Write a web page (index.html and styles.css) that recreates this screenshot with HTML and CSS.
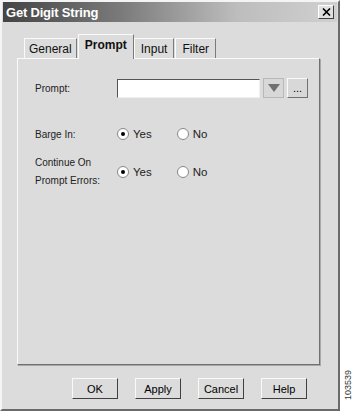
FILE: index.html
```html
<!DOCTYPE html>
<html>
<head>
<meta charset="utf-8">
<link rel="stylesheet" href="styles.css">
</head>
<body>
<div class="page">
  <div class="window">
    <div class="titlebar">
      <span class="title">Get Digit String</span>
      <span class="close">
        <svg width="9" height="8" viewBox="0 0 9 8"><path d="M1 0.5 L8 7.5 M8 0.5 L1 7.5" stroke="#000" stroke-width="1.6"/></svg>
      </span>
    </div>
    <div class="body">
      <div class="tabs">
        <div class="tab">General</div>
        <div class="tab active">Prompt</div>
        <div class="tab">Input</div>
        <div class="tab">Filter</div>
      </div>
      <div class="panel">
        <div class="row prompt-row">
          <span class="label">Prompt:</span>
          <span class="input"></span>
          <span class="drop"><svg width="12" height="8" viewBox="0 0 12 8"><path d="M0 0 H12 L6 8 Z" fill="#707070"/></svg></span>
          <span class="dots">...</span>
        </div>
        <div class="row barge-row">
          <span class="label">Barge In:</span>
          <span class="radio on"></span><span class="rtext">Yes</span>
          <span class="radio no"></span><span class="rtext">No</span>
        </div>
        <div class="row cont-row">
          <span class="label two">Continue On<br>Prompt Errors:</span>
          <span class="radio on"></span><span class="rtext">Yes</span>
          <span class="radio no"></span><span class="rtext">No</span>
        </div>
      </div>
      <div class="buttons">
        <span class="btn">OK</span>
        <span class="btn">Apply</span>
        <span class="btn">Cancel</span>
        <span class="btn">Help</span>
      </div>
    </div>
  </div>
  <div class="side"><span class="fig">103539</span></div>
</div>
</body>
</html>
```
FILE: styles.css
```css
html, body { margin: 0; padding: 0; background: #fff; }
body { font-family: "Liberation Sans", Arial, sans-serif; font-size: 11px; color: #000; }
.page { display: flex; width: 353px; height: 411px; }
.window {
  width: 336px; height: 407px;
  background: #dcdcdc;
  border-left: 2px solid #f4f4f4;
  border-top: 2px solid #f4f4f4;
  border-right: 2px solid #6a6a6a;
  border-bottom: 2px solid #6a6a6a;
  display: flex; flex-direction: column;
}
.titlebar {
  height: 20px; margin: 0 1px 0 1px;
  background: linear-gradient(to right, #444 0%, #7a7a7a 35%, #bdbdbd 70%, #d0d0d0 100%);
  display: flex; align-items: center; justify-content: space-between;
  padding: 0 3px 0 3px;
}
.title { color: #fff; font-weight: bold; font-size: 13px; letter-spacing: -0.2px; }
.close {
  width: 14px; height: 12px; background: #e0e0e0;
  border-top: 1px solid #fff; border-left: 1px solid #fff;
  border-right: 1px solid #404040; border-bottom: 1px solid #404040;
  display: flex; align-items: center; justify-content: center;
}
.body { flex: 1; display: flex; flex-direction: column; padding: 12px 15px 0 15px; }
.tabs { display: flex; align-items: flex-end; height: 24px; padding-left: 7px; }
.tab {
  height: 19px; padding: 0 4px 0 4px; line-height: 20px;
  font-size: 12px; color: #111;
  border-top: 1px solid #fafafa; border-left: 1px solid #fafafa;
  border-right: 1px solid #7a7a7a;
  margin-right: 1px;
}
.tab:nth-child(3), .tab:nth-child(4) { padding: 0 6px; }
.tab.active {
  height: 24px; font-weight: bold; line-height: 20px;
  padding: 0 6px 0 6px;
  margin: 0 0 -1px 0;
  background: #dcdcdc; position: relative; z-index: 1;
  font-size: 12px;
}
.panel {
  height: 307px; width: 303px;
  border-top: 1px solid #fafafa; border-left: 1px solid #fafafa;
  border-right: 1px solid #707070; border-bottom: 1px solid #707070;
  box-shadow: 1px 1px 0 #a8a8a8;
  display: flex; flex-direction: column;
  padding: 19px 0 0 17px;
  box-sizing: border-box;
}
.row { display: flex; align-items: center; }
.label { width: 82px; color: #222; font-size: 10px; }
.prompt-row { height: 20px; }
.input {
  width: 141px; height: 17px; background: #fff;
  border-top: 1px solid #555; border-left: 1px solid #555;
  border-right: 1px solid #f0f0f0; border-bottom: 1px solid #f0f0f0;
}
.drop {
  width: 19px; height: 18px; margin-left: 3px; background: #d8d8d8;
  border: 1px solid #b8b8b8;
  display: flex; align-items: center; justify-content: center;
}
.dots {
  width: 19px; height: 18px; margin-left: 3px; background: #d8d8d8;
  border-top: 1px solid #fafafa; border-left: 1px solid #fafafa;
  border-right: 1px solid #707070; border-bottom: 1px solid #707070;
  display: flex; align-items: center; justify-content: center; line-height: 10px;
}
.barge-row { margin-top: 28px; height: 16px; }
.cont-row { margin-top: 12px; }
.label.two { line-height: 18px; }
.radio {
  width: 10px; height: 10px; border-radius: 50%; background: #fff;
  border: 1px solid #888; box-sizing: content-box; position: relative;
  margin-right: 4px;
}
.radio.on::after {
  content: ""; position: absolute; left: 3px; top: 3px; width: 4px; height: 4px;
  border-radius: 50%; background: #000;
}
.radio.no { margin-left: 25px; }
.rtext { font-size: 11.5px; color: #222; }
.buttons { display: flex; gap: 17px; padding-left: 55px; margin-top: 13px; }
.btn {
  width: 44px; height: 19px; display: flex; align-items: center; justify-content: center;
  border-top: 1px solid #fafafa; border-left: 1px solid #fafafa;
  border-right: 1px solid #404040; border-bottom: 1px solid #404040;
  font-size: 11px;
}
.side { flex: 1; position: relative; }
.fig {
  position: absolute; left: 3px; top: 400px;
  transform: rotate(-90deg); transform-origin: left top;
  font-size: 9px; color: #333;
}
```
